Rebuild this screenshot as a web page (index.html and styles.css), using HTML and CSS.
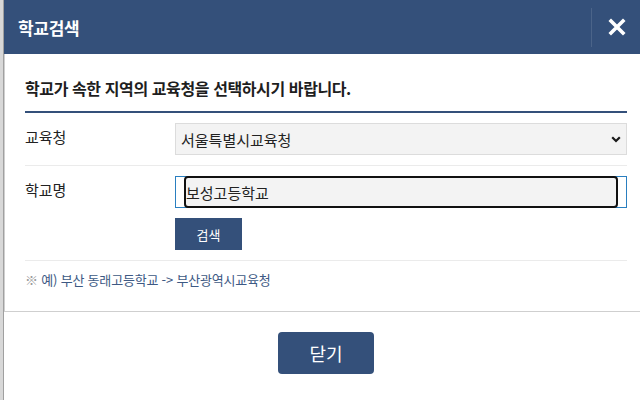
FILE: index.html
```html
<!DOCTYPE html>
<html lang="ko">
<head>
<meta charset="utf-8">
<title>학교검색</title>
<link rel="stylesheet" href="styles.css">
</head>
<body>
<div class="dialog">
  <header class="hd">
    <h1 class="title">학교검색</h1>
    <button class="close" type="button" aria-label="닫기">
      <svg width="18" height="18" viewBox="0 0 18 18"><path d="M3 3 L15 15 M15 3 L3 15" stroke="#fff" stroke-width="3.6" stroke-linecap="square" fill="none"/></svg>
    </button>
  </header>
  <div class="bd">
    <p class="intro">학교가 속한 지역의 교육청을 선택하시기 바랍니다.</p>
    <div class="row row-office">
      <label class="lbl">교육청</label>
      <div class="field">
        <div class="select-wrap">
          <select class="sel"><option>서울특별시교육청</option></select>
          <svg class="chev" width="10" height="7" viewBox="0 0 10 7"><path d="M1.2 1.2 L5 5 L8.8 1.2" stroke="#1a1a1a" stroke-width="2.2" fill="none"/></svg>
        </div>
      </div>
    </div>
    <div class="row row-school">
      <label class="lbl">학교명</label>
      <div class="field">
        <div class="input-ring"><input class="inp" type="text" value="보성고등학교"></div>
        <button class="btn-search" type="button">검색</button>
      </div>
    </div>
    <p class="note"><span class="mark">※</span> 예) 부산 동래고등학교 -&gt; 부산광역시교육청</p>
  </div>
  <footer class="ft">
    <button class="btn-close" type="button">닫기</button>
  </footer>
</div>
</body>
</html>
```
FILE: styles.css
```css
html, body {
  margin: 0;
  padding: 0;
}
body {
  background: #d8d8d8;
  font-family: "Noto Sans CJK KR", "Noto Sans", sans-serif;
  color: #222;
}
.dialog {
  margin-left: 3px;
  border-left: 1px solid #a0a0a0;
  background: #fff;
  height: 400px;
  display: flex;
  flex-direction: column;
}
.hd {
  height: 54px;
  flex: none;
  background: #34507a;
  display: flex;
  align-items: center;
  padding-left: 14px;
}
.title {
  margin: 0;
  flex: 1;
  font-size: 17px;
  font-weight: 700;
  color: #fff;
  letter-spacing: -0.3px;
}
.close {
  width: 49px;
  height: 39px;
  padding: 0;
  border: 0;
  border-left: 1px solid #4b6489;
  background: transparent;
  display: flex;
  align-items: center;
  justify-content: center;
}
.close svg {
  margin-left: 2px;
}
.bd {
  flex: 1;
  border-left: 1px solid #cfcfcf;
  border-bottom: 1px solid #cfcfcf;
  padding: 0 13px 0 20px;
}
.intro {
  margin: 0;
  padding: 24px 0 13px;
  font-size: 16px;
  line-height: 20px;
  font-weight: 700;
  color: #1e1e1e;
  letter-spacing: -0.4px;
  border-bottom: 2px solid #34507a;
}
.row {
  display: flex;
  padding: 10px 0;
  border-bottom: 1px solid #ebebeb;
}
.lbl {
  width: 150px;
  flex: none;
  font-size: 15px;
  line-height: 28px;
  color: #222;
}
.field {
  flex: 1;
  display: flex;
  flex-direction: column;
  align-items: flex-start;
}
.select-wrap {
  position: relative;
  width: 100%;
}
.sel {
  display: block;
  width: 100%;
  height: 32px;
  box-sizing: border-box;
  -webkit-appearance: none;
  appearance: none;
  background: #f3f3f3;
  border: 1px solid #dcdcdc;
  border-radius: 0;
  padding: 0 5px;
  font-family: "Noto Sans CJK KR", sans-serif;
  font-size: 15px;
  color: #222;
}
.chev {
  position: absolute;
  right: 6px;
  top: 13px;
}
.input-ring {
  width: 100%;
  height: 32px;
  box-sizing: border-box;
  border: 1px solid #2a7fc0;
  padding: 0 8px;
  background: #fff;
}
.inp {
  display: block;
  width: 100%;
  height: 32px;
  margin: -1px 0 0;
  box-sizing: border-box;
  border: 2px solid #111;
  border-radius: 4px;
  background: #f3f3f3;
  padding: 0;
  font-family: "Noto Sans CJK KR", sans-serif;
  font-size: 15px;
  color: #222;
  outline: none;
}
.btn-search {
  margin-top: 10px;
  width: 67px;
  height: 32px;
  border: 0;
  background: #34507a;
  color: #fff;
  font-family: "Noto Sans CJK KR", sans-serif;
  font-size: 13px;
  padding: 0;
}
.note {
  margin: 0;
  padding-top: 9px;
  font-size: 13px;
  line-height: 20px;
  color: #3d5984;
  letter-spacing: -0.2px;
}
.mark {
  color: #9a9a9a;
}
.ft {
  height: 88px;
  flex: none;
  display: flex;
  justify-content: center;
  align-items: flex-start;
  padding: 20px 0 0 8px;
  box-sizing: border-box;
}
.btn-close {
  width: 96px;
  height: 42px;
  border: 0;
  border-radius: 4px;
  background: #34507a;
  color: #fff;
  font-family: "Noto Sans CJK KR", sans-serif;
  font-size: 18px;
  padding: 0;
}
```
